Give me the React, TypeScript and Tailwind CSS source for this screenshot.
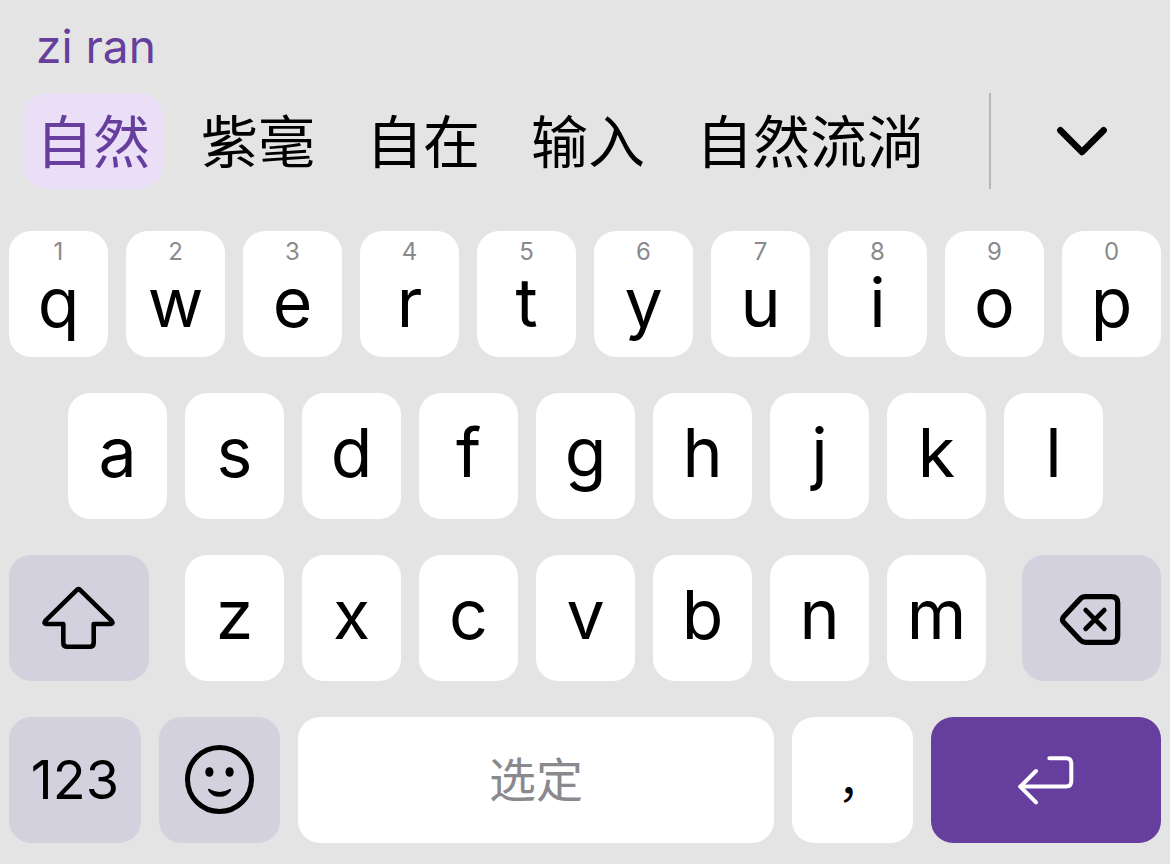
import type { ReactNode } from "react";
import clsx from "clsx";

const candidates = ["自然", "紫毫", "自在", "输入", "自然流淌"];

const topRow = ["q", "w", "e", "r", "t", "y", "u", "i", "o", "p"];
const middleRow = ["a", "s", "d", "f", "g", "h", "j", "k", "l"];
const bottomRow = ["z", "x", "c", "v", "b", "n", "m"];

function ShiftIcon() {
  return (
    <svg width="74" height="64" viewBox="0 0 74 64" fill="none" stroke="currentColor" strokeWidth="4.6" strokeLinejoin="round" aria-hidden="true">
      <path d="M35.2 3.6Q36.5 2.3 37.8 3.6L69.7 34.8Q71.6 38 68.8 38H51.7V56.8Q51.7 60.8 47.7 60.8H25.3Q21.3 60.8 21.3 56.8V38H4.2Q1.4 38 3.3 34.8Z" />
    </svg>
  );
}

function BackspaceIcon() {
  return (
    <svg width="66" height="58" viewBox="0 -4 66 58" fill="none" stroke="currentColor" strokeLinecap="round" strokeLinejoin="round" aria-hidden="true">
      <path strokeWidth="5.3" d="M26.5 3.6H52.4Q58.7 3.6 58.7 9.9V43Q58.7 49.3 52.4 49.3H26.5Q23.4 49.3 21.2 47L4.6 29.2Q2.4 26.5 4.6 23.8L21.2 5.9Q23.4 3.6 26.5 3.6Z" />
      <path strokeWidth="4.8" d="M26.7 17.1L45.3 35.8M45.3 17.1L26.7 35.8" />
    </svg>
  );
}

function SmileIcon() {
  return (
    <svg width="70" height="70" viewBox="0 0 70 70" aria-hidden="true">
      <circle cx="34.5" cy="34.5" r="32" fill="none" stroke="currentColor" strokeWidth="5" />
      <ellipse cx="24.4" cy="27" rx="4.1" ry="4.8" />
      <ellipse cx="44.6" cy="27" rx="4.1" ry="4.8" />
      <path d="M24.4 44Q34.5 49.8 44.8 44Q46.8 43.4 46 45.4Q42.4 51.8 34.6 51.8Q26.8 51.8 23.2 45.4Q22.4 43.4 24.4 44Z" />
    </svg>
  );
}

function ReturnIcon() {
  return (
    <svg width="58" height="50" viewBox="0 0 58 50" fill="none" stroke="currentColor" strokeWidth="4" strokeLinecap="round" strokeLinejoin="round" aria-hidden="true">
      <path d="M32.3 3.3H49Q54.3 3.3 54.3 8.6V26.2Q54.3 31.5 49 31.5H3.3" />
      <path d="M19 16L3.3 31.7L19 47.4" />
    </svg>
  );
}

function ChevronIcon() {
  return (
    <svg width="52" height="32" viewBox="0 0 52 32" fill="none" stroke="currentColor" strokeWidth="6.6" strokeLinecap="round" strokeLinejoin="round" aria-hidden="true">
      <path d="M5.4 5.3L27 27L48.6 5.3" />
    </svg>
  );
}

function LetterKey({ letter, hint }: { letter: string; hint?: number }) {
  return (
    <button
      type="button"
      className={clsx(
        "flex h-[126px] min-w-0 flex-col items-center rounded-[22px] bg-white",
        hint === undefined ? "justify-center pb-2" : "gap-1 pt-[9px]"
      )}
    >
      {hint !== undefined && <span className="text-[24px] leading-[24px] text-[#8a8a8e]">{hint}</span>}
      <span className="text-[68px] leading-[68px]">{letter}</span>
    </button>
  );
}

function ActionKey({ label, className, children }: { label: string; className: string; children: ReactNode }) {
  return (
    <button
      type="button"
      aria-label={label}
      className={clsx("flex h-[126px] min-w-0 items-center justify-center rounded-[22px]", className)}
    >
      {children}
    </button>
  );
}

export default function App() {
  return (
    <main className="min-h-screen bg-[#e4e4e4] pb-[21px] font-['Inter','Noto_Sans_CJK_SC',sans-serif] text-black">
      <p className="px-9 pt-[22px] text-[46px] leading-[48px] text-[#663f9e]">zi ran</p>

      <div className="mt-[23px] flex h-24 items-stretch">
        <div className="flex flex-1 gap-[25px] pl-[23px]">
          {candidates.map((word, i) => (
            <button
              key={word}
              type="button"
              className={clsx(
                "shrink-0 rounded-[24px] px-[13px] pt-1 text-[57px] leading-[56px] whitespace-nowrap",
                i === 0 && "bg-[#ebdff7] text-[#663f9e]"
              )}
            >
              {word}
            </button>
          ))}
        </div>
        <button
          type="button"
          aria-label="展开候选"
          className="flex w-[181px] items-center justify-center border-l-2 border-[#b8b8b8]"
        >
          <ChevronIcon />
        </button>
      </div>

      <div className="mt-[42px] flex flex-col gap-9 px-[9px]">
        <div className="grid grid-cols-10 gap-[18px]">
          {topRow.map((letter, i) => (
            <LetterKey key={letter} letter={letter} hint={(i + 1) % 10} />
          ))}
        </div>

        <div className="grid grid-cols-9 gap-[18px] pr-[58px] pl-[59px]">
          {middleRow.map((letter) => (
            <LetterKey key={letter} letter={letter} />
          ))}
        </div>

        <div className="grid grid-cols-[140fr_801fr_139fr] gap-9">
          <ActionKey label="Shift" className="bg-[#d3d1de]">
            <ShiftIcon />
          </ActionKey>
          <div className="grid grid-cols-7 gap-[18px]">
            {bottomRow.map((letter) => (
              <LetterKey key={letter} letter={letter} />
            ))}
          </div>
          <ActionKey label="删除" className="bg-[#d3d1de]">
            <BackspaceIcon />
          </ActionKey>
        </div>

        <div className="grid grid-cols-[132fr_121fr_476fr_121fr_230fr] gap-[18px]">
          <ActionKey label="123" className="bg-[#d3d1de] text-[54px] leading-[56px]">
            123
          </ActionKey>
          <ActionKey label="表情" className="bg-[#d3d1de]">
            <SmileIcon />
          </ActionKey>
          <ActionKey label="选定" className="bg-white text-[47px] leading-[56px] text-[#8a8a8e]">
            选定
          </ActionKey>
          <ActionKey label="逗号" className="bg-white pl-4 text-[46px] leading-[56px]">
            ，
          </ActionKey>
          <ActionKey label="换行" className="bg-[#663f9e] text-white">
            <ReturnIcon />
          </ActionKey>
        </div>
      </div>
    </main>
  );
}
